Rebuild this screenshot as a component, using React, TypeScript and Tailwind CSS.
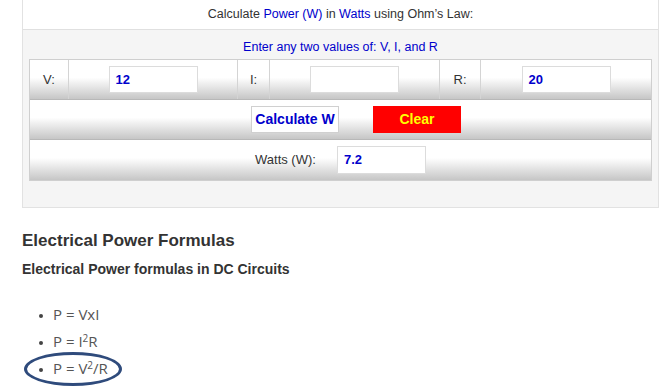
export default function App() {
  const rowBg =
    "bg-[linear-gradient(to_bottom,#ffffff_0%,#ffffff_45%,#c6c6c6_100%)]";
  const inputBox =
    "w-[89px] h-[27px] bg-white border border-[#dcdcdc] pl-[6px] flex items-center text-[13px] font-bold text-[#0000cc]";

  return (
    <div className="relative w-[665px] h-[387px] overflow-hidden bg-white font-['Liberation_Sans',Arial,sans-serif]">
      {/* calculator panel */}
      <div className="ml-[22px] w-[637px] border-x border-b border-[#e2e2e2] bg-[#f5f5f5] pb-[26px]">
        <div className="h-[30px] bg-white border-b border-[#e0e0e0] flex items-center justify-center text-[12.5px] text-[#333]">
          <span>
            Calculate <span className="text-[#0000cc]">Power (W)</span> in{" "}
            <span className="text-[#0000cc]">Watts</span> using Ohm’s Law:
          </span>
        </div>
        <div className="h-[29px] pt-[10px] text-center text-[12.5px] leading-[14px] text-[#0000cc]">
          Enter any two values of: V, I, and R
        </div>

        <div className="mx-[6px] border border-[#cfcfcf] text-[13px] text-[#333]">
          <div
            className={`grid grid-cols-[38px_169px_32px_170px_41px_1fr] h-[40px] border-b border-[#b8b8b8] ${rowBg}`}
          >
            <div className="flex items-center justify-center">V:</div>
            <div className="flex items-center justify-center border-l border-[#d4d4d4]">
              <div className={inputBox}>12</div>
            </div>
            <div className="flex items-center justify-center border-l border-[#d4d4d4]">I:</div>
            <div className="flex items-center justify-center border-l border-[#d4d4d4]">
              <div className={inputBox}></div>
            </div>
            <div className="flex items-center justify-center border-l border-[#d4d4d4]">R:</div>
            <div className="flex items-center justify-center border-l border-[#d4d4d4]">
              <div className={inputBox}>20</div>
            </div>
          </div>

          <div className={`h-[40px] border-b border-[#b8b8b8] flex items-center pl-[221px] ${rowBg}`}>
            <button className="w-[88px] h-[27px] bg-white border border-[#d0d0d0] text-[14px] font-bold text-[#0000cc]">
              Calculate W
            </button>
            <button className="ml-[34px] w-[88px] h-[27px] bg-[#ff0000] text-[14px] font-bold text-[#ffff00]">
              Clear
            </button>
          </div>

          <div className={`h-[40px] flex items-center pl-[225px] gap-[21px] ${rowBg}`}>
            <span>Watts (W):</span>
            <div className="w-[89px] h-[28px] bg-white border border-[#dcdcdc] pl-[6px] flex items-center text-[13px] font-bold text-[#0000cc]">
              7.2
            </div>
          </div>
        </div>
      </div>

      {/* formulas */}
      <div className="pl-[22px] text-[#333]">
        <h2 className="mt-[23px] text-[17px] leading-[20px] font-bold">
          Electrical Power Formulas
        </h2>
        <h3 className="mt-[10px] text-[14px] leading-[17px] font-bold">
          Electrical Power formulas in DC Circuits
        </h3>
        <ul className="mt-[23px] font-['Open_Sans',sans-serif] text-[15px] text-[#555]">
          <li className="h-[27px] flex items-center pl-[17px]">
            <span className="w-[4px] h-[4px] rounded-full bg-[#444] mr-[10px] mt-[3px]"></span>
            P = VxI
          </li>
          <li className="h-[27px] flex items-center pl-[17px]">
            <span className="w-[4px] h-[4px] rounded-full bg-[#444] mr-[10px] mt-[3px]"></span>
            <span>
              P = I<sup className="text-[10px]">2</sup>R
            </span>
          </li>
          <li className="h-[27px] flex items-center pl-[17px]">
            <span className="w-[4px] h-[4px] rounded-full bg-[#444] mr-[10px] mt-[3px]"></span>
            <span>
              P = V<sup className="text-[10px]">2</sup>/R
            </span>
          </li>
        </ul>
      </div>

      {/* annotation circle */}
      <div className="absolute left-[24px] top-[352px] w-[98px] h-[34px] rounded-[50%] border-[3px] border-[#2f4b7c]"></div>
    </div>
  );
}
